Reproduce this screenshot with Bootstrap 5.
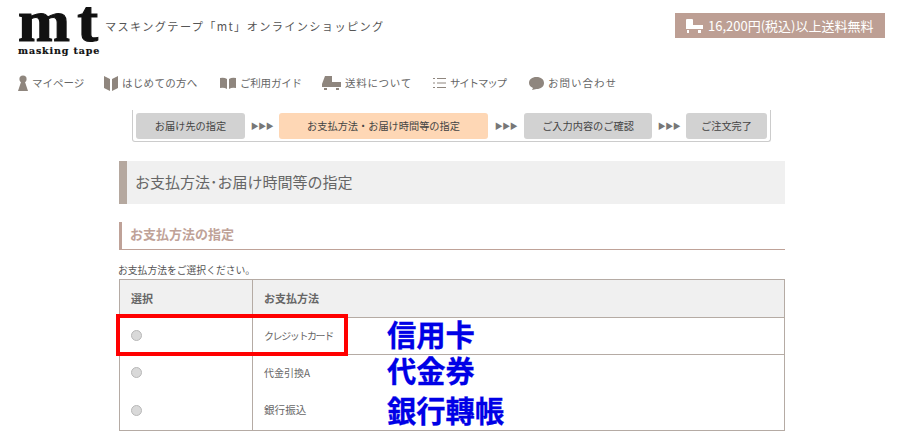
<!DOCTYPE html>
<html lang="ja">
<head>
<meta charset="utf-8">
<title>mt</title>
<link rel="stylesheet" href="https://cdn.jsdelivr.net/npm/bootstrap@5.3.0/dist/css/bootstrap.min.css">
<style>
html,body{height:441px;overflow:hidden}
body{font-family:"Noto Sans CJK JP","Liberation Sans",sans-serif;color:#555;background:#fff;position:relative}
.top-head{height:69px;padding:0 15px 0 18px}
.logo-box{width:82px;color:#111;font-family:"Liberation Serif",serif;font-weight:700;line-height:1}
.logo-mt{font-size:60px;letter-spacing:7px;line-height:42px;height:42px;transform:scaleX(1.04);transform-origin:left;white-space:nowrap;-webkit-text-stroke:1.2px #111}
.logo-sub{font-family:"DejaVu Serif",serif;font-size:9.5px;letter-spacing:.85px;line-height:12px;margin-top:3px;white-space:nowrap;-webkit-text-stroke:.2px #111}
.tagline{font-size:11.2px;letter-spacing:1.35px;color:#555;margin:18px 0 0 5px;line-height:16px;white-space:nowrap}
.ship-banner{width:210px;height:25px;background:#bd9f94;color:#fff;font-size:13px;margin:13px 0 0 auto;padding-left:10px;white-space:nowrap}
.main-nav{height:28px;padding-left:18px;font-size:10.5px;color:#666}
.nav-slot{white-space:nowrap}
.slot-a{width:86px;letter-spacing:0}.slot-b{width:116px;letter-spacing:.3px}.slot-c{width:102px;letter-spacing:-.2px}.slot-d{width:111px;letter-spacing:.7px}.slot-e{width:96px;letter-spacing:-1.2px}.slot-f{letter-spacing:1px}
.step-wrap{margin:13px 0 0 132px;width:639px;height:32px;border:1px solid #ccc;border-top:0;border-radius:0 0 3px 3px;padding:3px 3px 2px}
.step-cell{height:26px;background:#d2d2d2;border-radius:3px;font-size:10.2px;color:#444;white-space:nowrap}
.step-on{background:#fed7b5}
.step-1{width:109px}.step-2{width:209px}.step-3{width:128px}.step-4{width:81px}
.arrow-gap{color:#777;font-size:8px;letter-spacing:-.5px;white-space:nowrap}
.gap-1a{width:34px}.gap-2a{width:36px}
.pay-main{width:666px;margin-left:119px}
.page-title{height:43px;margin-top:19px;background:#f0f0f0;border-left:8px solid #b5a89f;padding:0 0 2px 8px;font-size:15px;color:#666;font-weight:400;margin-bottom:0}
.sub-title{height:28px;margin-top:18px;border-left:3px solid #bfa298;border-bottom:1px solid #bfa298;padding:0 0 4px 8px;font-size:13px;font-weight:700;color:#bfa298;margin-bottom:0}
.pick-note{font-size:9.8px;color:#555;height:29px;padding-top:13px;line-height:15px;margin:0 0 0 -1px;white-space:nowrap}
.pay-table{width:666px;margin:0;border:1px solid #b5aba4;font-size:10.6px;color:#666;border-collapse:collapse;table-layout:fixed}
.pay-table th{height:38px;background:#f0f0f0;padding:0 0 0 11px;font-size:11px;font-weight:700;color:#666;border-bottom:1px solid #b5aba4;vertical-align:middle}
.pay-table td{padding:0 0 2px 11px;vertical-align:middle;height:38px;background:#fff;border-bottom:0;color:#666}
.pay-table .cell-first{width:133px;border-right:1px solid #b5aba4}
.pay-table .row-line td{height:37px;border-bottom:1px solid #b5aba4}
.pay-table .card-label{font-size:10px;letter-spacing:-1.4px}
.pay-table .cash-label{font-size:10px}
.pay-radio{appearance:none;display:block;width:11px;height:11px;border-radius:50%;margin:0;background:#d9d9d9;border:1px solid #b8b8b8}
.red-mark{position:absolute;left:116px;top:314px;width:232px;height:42px;border:4px solid #f00}
.blue-note{position:absolute;left:387px;font-family:"Noto Sans CJK TC",sans-serif;font-weight:700;font-size:29.3px;line-height:30px;color:#0000e6;white-space:nowrap;-webkit-text-stroke:.3px #0000e6}
.note-a{top:318px}.note-b{top:354px}.note-c{top:394px}
</style>
</head>
<body>
<header class="top-head d-flex align-items-start">
  <div class="logo-box">
    <div class="logo-mt">mt</div>
    <div class="logo-sub">masking tape</div>
  </div>
  <div class="tagline">マスキングテープ「mt」オンラインショッピング</div>
  <div class="ship-banner d-flex align-items-center gap-1">
    <svg width="19" height="16" viewBox="0 0 19 16" fill="#fff"><path d="M1 10V2q0-1 1-1h5q1 0 1 1v5h10v4H1zM2 12h2v3H2zM13 12h3v3h-3z"/></svg>
    <span>16,200円(税込)以上送料無料</span>
  </div>
</header>
<nav class="main-nav d-flex align-items-center">
  <div class="nav-slot slot-a d-flex align-items-center gap-1">
    <svg width="10" height="16" viewBox="0 0 10 16" fill="#8f867e"><circle cx="5" cy="4" r="3.6"/><path d="M3 7h4l1 3 2 6H0l2-6z"/></svg><span>マイページ</span>
  </div>
  <div class="nav-slot slot-b d-flex align-items-center gap-1">
    <svg width="14" height="15" viewBox="0 0 14 15" fill="#8f867e"><path d="M0 0l6 3v12L0 12zM14 0L8 3v12l6-3z"/></svg><span>はじめての方へ</span>
  </div>
  <div class="nav-slot slot-c d-flex align-items-center gap-1">
    <svg width="16" height="12" viewBox="0 0 16 12" fill="#8f867e"><path d="M0 1q4-1 7 1v10q-3-2-7-1zM16 1q-4-1-7 1v10q3-2 7-1z"/></svg><span>ご利用ガイド</span>
  </div>
  <div class="nav-slot slot-d d-flex align-items-center gap-1">
    <svg width="19" height="14" viewBox="0 0 19 14" fill="#8f867e"><path d="M3 0h7v6h9v5H0V8zM2 12h3v2H2zM14 12h3v2h-3z"/></svg><span>送料について</span>
  </div>
  <div class="nav-slot slot-e d-flex align-items-center gap-1">
    <svg width="13" height="12" viewBox="0 0 13 12" fill="none" stroke="#8f867e" stroke-width="1"><path d="M0 1.5h2M4 1.5h9M0 6h2M4 6h9M0 10.500h2M4 10.500h9"/></svg><span>サイトマップ</span>
  </div>
  <div class="nav-slot slot-f d-flex align-items-center gap-1">
    <svg width="15" height="13" viewBox="0 0 15 13" fill="#8f867e"><path d="M7.500 0C12 0 15 2.500 15 6s-3 6-7.500 6L3 13l1-2C1.500 10 0 8 0 6c0-3.500 3-6 7.500-6z"/></svg><span>お問い合わせ</span>
  </div>
</nav>
<div class="step-wrap d-flex">
  <div class="step-cell step-1 d-flex align-items-center justify-content-center">お届け先の指定</div>
  <div class="arrow-gap gap-1a d-flex align-items-center justify-content-center">▶▶▶</div>
  <div class="step-cell step-2 step-on d-flex align-items-center justify-content-center">お支払方法・お届け時間等の指定</div>
  <div class="arrow-gap gap-2a d-flex align-items-center justify-content-center">▶▶▶</div>
  <div class="step-cell step-3 d-flex align-items-center justify-content-center">ご入力内容のご確認</div>
  <div class="arrow-gap gap-1a d-flex align-items-center justify-content-center">▶▶▶</div>
  <div class="step-cell step-4 d-flex align-items-center justify-content-center">ご注文完了</div>
</div>
<main class="pay-main">
  <h2 class="page-title d-flex align-items-center">お支払方法･お届け時間等の指定</h2>
  <h3 class="sub-title d-flex align-items-center">お支払方法の指定</h3>
  <p class="pick-note">お支払方法をご選択ください。</p>
  <table class="table pay-table">
    <thead>
      <tr><th class="cell-first">選択</th><th>お支払方法</th></tr>
    </thead>
    <tbody>
      <tr class="row-line"><td class="cell-first"><input class="pay-radio" type="radio" name="pay" disabled aria-label="クレジットカード"></td><td class="card-label">クレジットカード</td></tr>
      <tr><td class="cell-first"><input class="pay-radio" type="radio" name="pay" disabled aria-label="代金引換"></td><td class="cash-label">代金引換A</td></tr>
      <tr><td class="cell-first"><input class="pay-radio" type="radio" name="pay" disabled aria-label="銀行振込"></td><td>銀行振込</td></tr>
    </tbody>
  </table>
</main>
<div class="red-mark"></div>
<div class="blue-note note-a">信用卡</div>
<div class="blue-note note-b">代金券</div>
<div class="blue-note note-c">銀行轉帳</div>
<script src="https://cdn.jsdelivr.net/npm/bootstrap@5.3.0/dist/js/bootstrap.bundle.min.js"></script>
</body>
</html>
